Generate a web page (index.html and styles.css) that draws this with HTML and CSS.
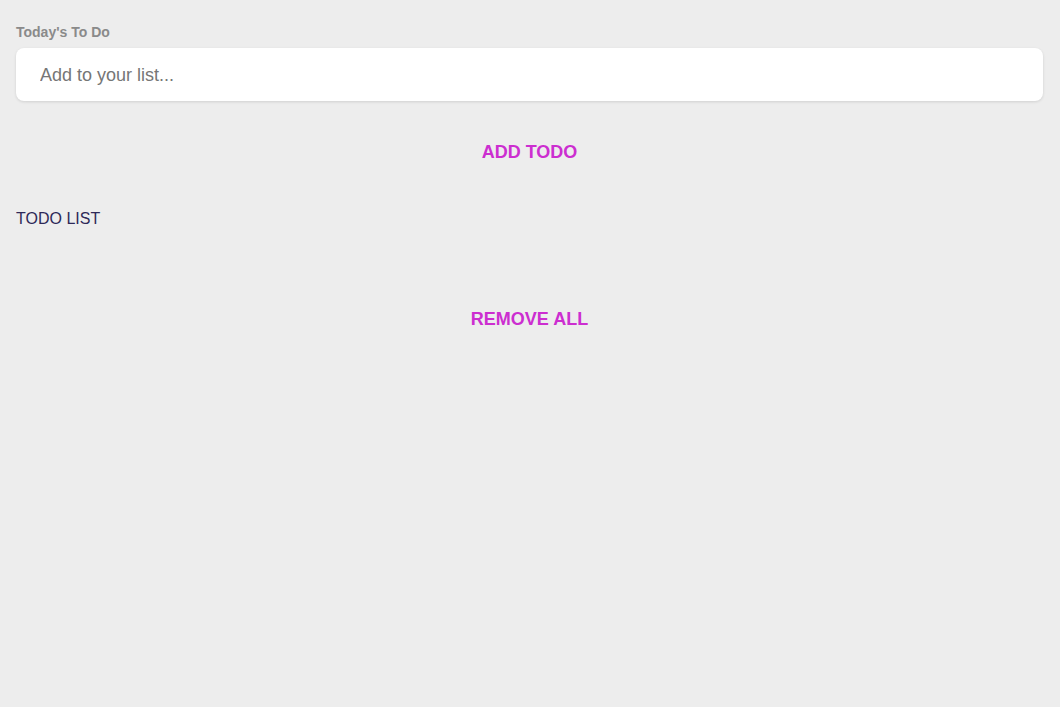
FILE: index.html
```html
<!DOCTYPE html>
<html>
<head>
<meta charset="utf-8">
<link rel="stylesheet" href="styles.css">
</head>
<body>
<div class="app">
  <label class="label" for="todo">Today's To Do</label>
  <input id="todo" class="input" type="text" placeholder="Add to your list...">
  <button class="btn add">ADD TODO</button>
  <div class="list-title">TODO LIST</div>
  <ul class="list"></ul>
  <button class="btn remove">REMOVE ALL</button>
</div>
</body>
</html>
```
FILE: styles.css
```css
html, body {
  margin: 0;
  padding: 0;
  background: #ededed;
  font-family: "Liberation Sans", Arial, sans-serif;
}
.app {
  display: flex;
  flex-direction: column;
  padding: 24px 17px 0 16px;
}
.label {
  font-size: 14px;
  font-weight: bold;
  color: #8a8a8a;
  line-height: 17px;
  margin-bottom: 7px;
}
.input {
  height: 53px;
  box-sizing: border-box;
  border: none;
  border-radius: 8px;
  background: #fff;
  padding: 2px 24px 0;
  font-family: "Liberation Sans", Arial, sans-serif;
  font-size: 18px;
  color: #333;
  box-shadow: 0 1px 3px rgba(0,0,0,0.12);
  outline: none;
}
.input::placeholder {
  color: #767676;
}
.btn {
  align-self: center;
  background: none;
  border: none;
  padding: 0;
  font-family: "Liberation Sans", Arial, sans-serif;
  font-size: 18px;
  font-weight: bold;
  color: #cc2ed0;
  line-height: 20px;
  cursor: pointer;
}
.add {
  margin-top: 41px;
}
.list-title {
  margin-top: 47px;
  font-size: 16px;
  line-height: 20px;
  color: #2e2958;
}
.list {
  margin: 0;
  padding: 0;
  list-style: none;
  height: 80px;
}
.remove {
  margin-top: 0;
}
```
